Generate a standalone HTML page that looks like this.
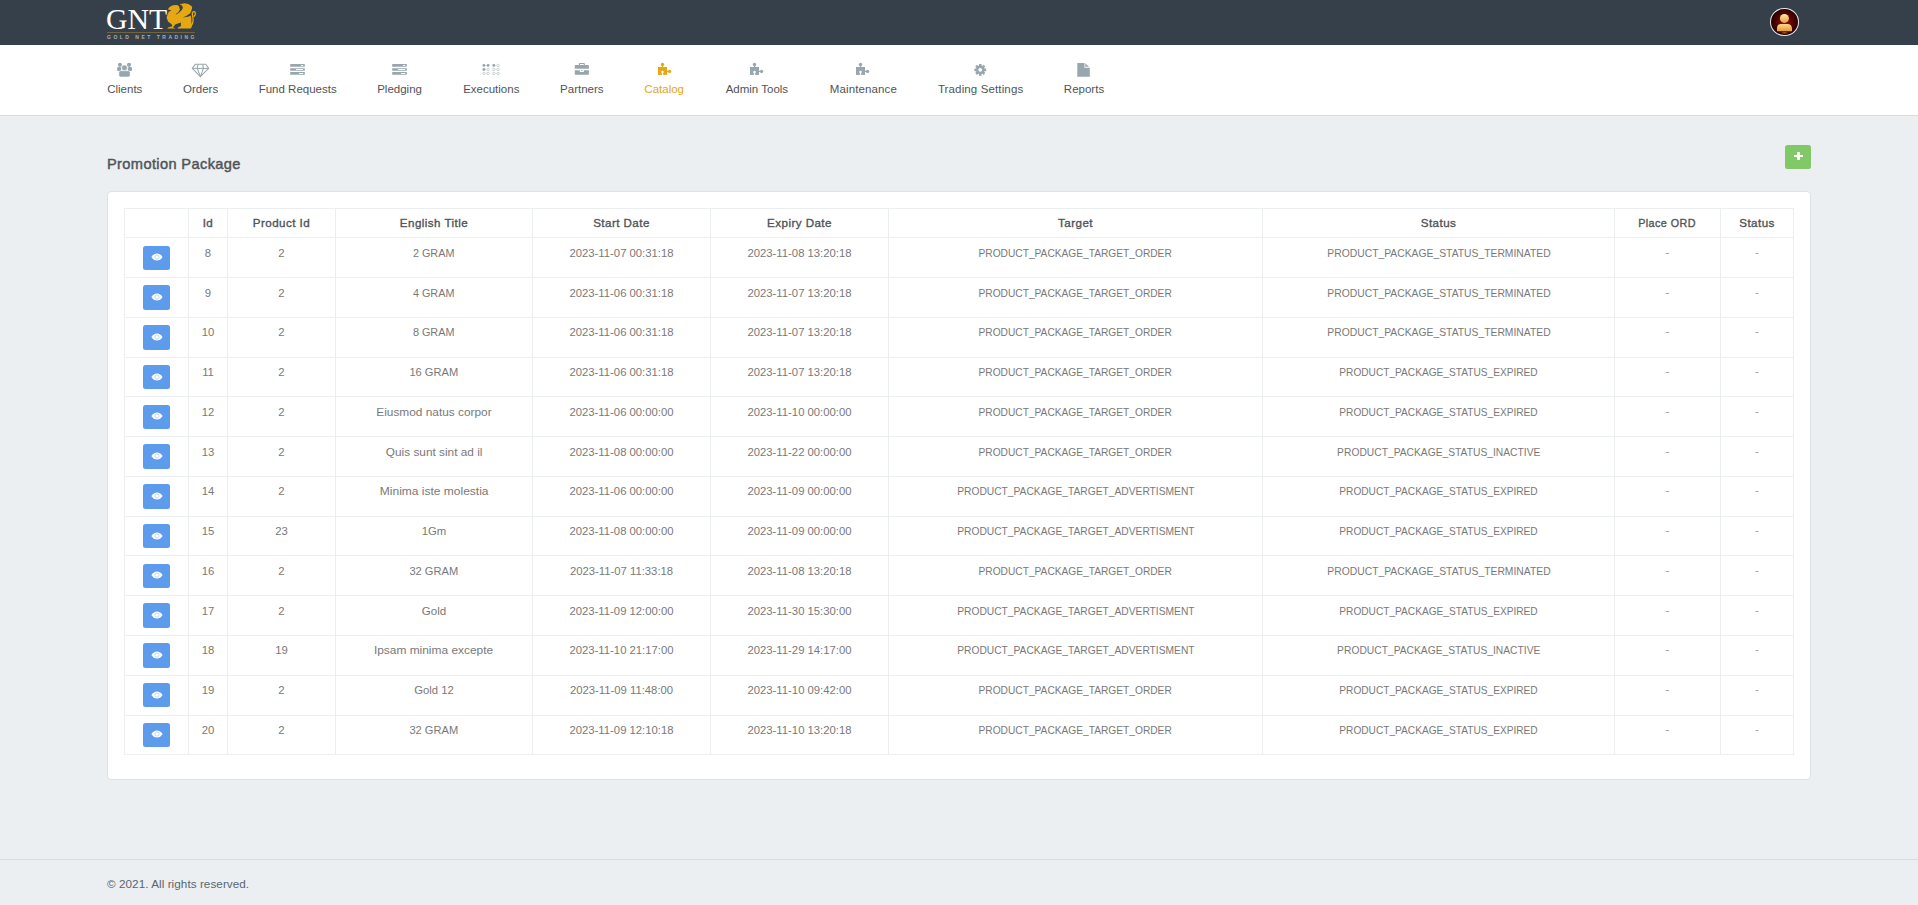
<!DOCTYPE html>
<html><head><meta charset="utf-8"><title>Promotion Package</title>
<style>
*{box-sizing:border-box;margin:0;padding:0}
html,body{width:1918px;height:905px;overflow:hidden}
body{background:#ebeff2;font-family:"Liberation Sans",sans-serif;color:#797979;position:relative}
.topbar{position:absolute;left:0;top:0;width:1918px;height:45px;background:#36404a}
.logo{position:absolute;left:107px;top:0;width:100px;height:45px}
.gnt{position:absolute;left:-1px;top:2.8px;font-family:"Liberation Serif",serif;color:#fff;font-size:29.8px;letter-spacing:0px;line-height:32px}
.gline{position:absolute;left:0;top:32px;width:88px;height:1px;background:#6e6440}
.gsub{position:absolute;left:0;top:34px;font-size:5px;line-height:6px;color:#a9aeb2;letter-spacing:2.5px;font-weight:bold;white-space:nowrap}
.avatar{position:absolute;left:1770px;top:7.5px;width:29px;height:28.6px;border-radius:50%;border:1.2px solid #e6e6e6;background:radial-gradient(circle at 52% 50%,#9a1005 0%,#600502 35%,#240000 72%,#0c0000 100%);overflow:hidden}
.navbar{position:absolute;left:0;top:45px;width:1918px;height:71px;background:#fff;border-bottom:1px solid #d6dbdf;box-shadow:0 1px 0 #eef1f4}
.ni{position:absolute;top:0;width:120px;height:70px;text-align:center}
.ic{position:absolute;line-height:0}
.nl{position:absolute;left:0;top:36px;width:120px;font-size:11.5px;line-height:16px;color:#505458;white-space:nowrap}
.act .nl{color:#e4a812}
.title{position:absolute;left:107px;top:154px;font-size:14.6px;line-height:20px;font-weight:normal;-webkit-text-stroke:0.45px #505458;letter-spacing:0.38px;color:#505458;white-space:nowrap}
.plus{position:absolute;left:1785px;top:145px;width:26px;height:24px;background:#81c868;border-radius:2.5px}
.card{position:absolute;left:107px;top:191px;width:1704px;height:589px;background:#fff;border:1px solid #dde2e6;border-radius:4px}
.tbl{position:absolute;left:124px;top:208px;width:1670px;height:547.31px}
.vl{position:absolute;top:0;width:1px;background:#ebeff2}
.hl{position:absolute;left:0;width:1670px;height:1px;background:#ebeff2}
.th{position:absolute;top:7px;font-size:11.6px;line-height:16px;font-weight:normal;-webkit-text-stroke:0.35px #505458;letter-spacing:0.45px;color:#505458;text-align:center;white-space:nowrap}
.td{position:absolute;font-size:11.3px;line-height:16px;padding-top:0;color:#797979;text-align:center;white-space:nowrap}
.dash{margin-top:-1px;color:#9a9a9a}
.btn{position:absolute;width:27px;height:24.5px;background:#5d9cec;border-radius:2.5px;display:flex;align-items:center;justify-content:center}
.btn svg{display:block;margin-top:-1px;margin-left:1px}
.footer{position:absolute;left:0;top:859px;width:1918px;height:46px;border-top:1px solid #d7dce0}
.foot{position:absolute;left:107px;top:15.6px;font-size:11.7px;line-height:16px;letter-spacing:0.06px;color:#58666e;white-space:nowrap}
</style></head>
<body>
<div class="topbar">
 <div class="logo">
  <div class="gnt">GNT</div>
  <svg style="position:absolute;left:56px;top:1px" width="36" height="30" viewBox="0 0 36 30"><path fill="#e5a812" d="M5.3 7.6L6.6 6.0L9.9 4.3L13.9 4.0L15.9 5.0L16.9 8.6L15.6 10.9L12.6 13.3L13.2 13.6L16.6 11.2L19.2 8.6L19.9 6.3L18.6 4.3L16.6 3.3L21.5 2.3L25.2 3.0L28.5 5.0L29.2 6.6L28.5 9.3L27.2 12.3L23.2 14.9L19.6 16.6L25.9 15.4L27.6 14.6L28.2 16.5L28.4 20.6L28.8 25.9L27.5 27.5L14.6 27.5L15.2 26.2L17.9 25.2L17.9 21.5L12.6 23.2L9.9 26.2L12.6 27.5L4.3 27.5L5.0 26.5L9.3 25.2L8.6 23.2L5.0 20.6L3.6 16.6L4.6 13.3L5.6 11.6L5.4 10.9L8.4 9.5L5.2 8.6Z"/><path fill="none" stroke="#e5a812" stroke-width="1.3" stroke-linecap="round" d="M28.3 24.5C30.6 22 30.2 17 29.4 13.6C29 11.5 30 10.3 31.3 10.6C32.6 11 32.8 13.5 31.2 15.3"/></svg>
  <div class="gline"></div>
  <div class="gsub">GOLD NET TRADING</div>
 </div>
 <div class="avatar"><svg width="27" height="27" viewBox="0 0 27 27"><defs><linearGradient id="gg" x1="0" y1="0" x2="0" y2="1"><stop offset="0" stop-color="#ffeaa0"/><stop offset="1" stop-color="#e8a040"/></linearGradient><linearGradient id="gb" x1="0" y1="0" x2="0" y2="1"><stop offset="0" stop-color="#fcd88a"/><stop offset="1" stop-color="#e39a3a"/></linearGradient><radialGradient id="gl" cx="0.5" cy="0.5" r="0.5"><stop offset="0" stop-color="#c9901a" stop-opacity="0.8"/><stop offset="1" stop-color="#c9901a" stop-opacity="0"/></radialGradient></defs><ellipse cx="13.5" cy="23.8" rx="4" ry="1.2" fill="url(#gl)"/><circle cx="13.4" cy="9.4" r="4.5" fill="url(#gg)"/><path d="M6 22.3V19.5C6 16.6 7.6 14.9 10.5 14.9H16.5C19.4 14.9 21 16.6 21 19.5V22.3Z" fill="url(#gb)"/></svg></div>
</div>
<div class="navbar">
<div class="ni" style="left:64.75px"><div class="nl" style="">Clients</div></div><div class="ni" style="left:140.60px"><div class="nl" style="">Orders</div></div><div class="ni" style="left:237.70px"><div class="nl" style="">Fund Requests</div></div><div class="ni" style="left:339.60px"><div class="nl" style="">Pledging</div></div><div class="ni" style="left:431.30px"><div class="nl" style="">Executions</div></div><div class="ni" style="left:521.80px"><div class="nl" style="">Partners</div></div><div class="ni act" style="left:604.20px"><div class="nl" style="">Catalog</div></div><div class="ni" style="left:696.90px"><div class="nl" style="">Admin Tools</div></div><div class="ni" style="left:803.40px"><div class="nl" style=";letter-spacing:0.13px">Maintenance</div></div><div class="ni" style="left:920.60px"><div class="nl" style=";letter-spacing:0.13px">Trading Settings</div></div><div class="ni" style="left:1024.00px"><div class="nl" style="">Reports</div></div><div class="ic" style="left:116px;top:17px"><svg width="16" height="16" viewBox="0 0 16 16"><circle cx="3.96" cy="2.86" r="2.05" fill="#98a6ad"/><circle cx="13.0" cy="2.86" r="2.05" fill="#98a6ad"/><rect x="1.1" y="5.1" width="4" height="3.8" rx="1.2" fill="#98a6ad"/><rect x="11.9" y="5.1" width="4.1" height="3.8" rx="1.2" fill="#98a6ad"/><circle cx="8.45" cy="5.8" r="2.85" fill="#98a6ad" stroke="#fff" stroke-width="0.5"/><path d="M2.9 10.4Q2.9 8.75 4.5 8.75H12.5Q14.1 8.75 14.1 10.4V13.2Q14.1 15 12.3 15H4.7Q2.9 15 2.9 13.2Z" fill="#98a6ad" stroke="#fff" stroke-width="0.5"/></svg></div><div class="ic" style="left:189px;top:15px"><svg width="22" height="20" viewBox="0 0 22 20" fill="none" stroke="#98a6ad" stroke-width="1.05" stroke-linejoin="round"><path d="M6.2 4.3H16.8L19.7 8.4L11.4 16.6L3.3 8.4Z"/><path d="M3.3 8.4H19.7"/><path d="M9.1 4.3L8.3 8.4L11.4 16.6L14.4 8.4L13.7 4.3"/></svg></div><div class="ic" style="left:287px;top:15px"><svg width="22" height="20" viewBox="0 0 22 20" fill="#98a6ad"><rect x="3.2" y="4.1" width="14.6" height="2.65" rx="0.5"/><rect x="3.2" y="8.15" width="14.6" height="2.65" rx="0.5"/><rect x="3.2" y="12.1" width="14.6" height="2.7" rx="0.5"/><g fill="#fff"><rect x="13.8" y="5" width="2.5" height="0.9" rx="0.45"/><rect x="8.8" y="9.05" width="7.5" height="0.9" rx="0.45"/><rect x="11.8" y="13" width="4.5" height="0.9" rx="0.45"/></g></svg></div><div class="ic" style="left:389px;top:15px"><svg width="22" height="20" viewBox="0 0 22 20" fill="#98a6ad"><rect x="3.2" y="4.1" width="14.6" height="2.65" rx="0.5"/><rect x="3.2" y="8.15" width="14.6" height="2.65" rx="0.5"/><rect x="3.2" y="12.1" width="14.6" height="2.7" rx="0.5"/><g fill="#fff"><rect x="13.8" y="5" width="2.5" height="0.9" rx="0.45"/><rect x="8.8" y="9.05" width="7.5" height="0.9" rx="0.45"/><rect x="11.8" y="13" width="4.5" height="0.9" rx="0.45"/></g></svg></div><div class="ic" style="left:479px;top:15px"><svg width="24" height="20" viewBox="0 0 24 20"><g stroke="#cfd6da" stroke-width="0.5"><path d="M4.9 5.4H9.1M14.8 5.4H19.1M4.9 9.5H9.1M14.8 9.5H19.1M4.9 13.5H9.1M14.8 13.5H19.1"/></g><g fill="#98a6ad"><circle cx="4.9" cy="5.4" r="1.45"/><circle cx="9.1" cy="5.4" r="1.45"/><circle cx="14.8" cy="5.4" r="1.45"/><circle cx="4.9" cy="9.5" r="1.45"/></g><g fill="#fff" stroke="#bcc5ca" stroke-width="0.8"><circle cx="19.1" cy="5.4" r="1.2"/><circle cx="9.1" cy="9.5" r="1.2"/><circle cx="14.8" cy="9.5" r="1.2"/><circle cx="19.1" cy="9.5" r="1.2"/><circle cx="4.9" cy="13.5" r="1.2"/><circle cx="9.1" cy="13.5" r="1.2"/><circle cx="14.8" cy="13.5" r="1.2"/><circle cx="19.1" cy="13.5" r="1.2"/></g></svg></div><div class="ic" style="left:570px;top:15px"><svg width="22" height="20" viewBox="0 0 22 20" fill="#98a6ad"><path d="M8.9 5.2V3.8Q8.9 3.1 9.6 3.1H14.1Q14.8 3.1 14.8 3.8V5.2H13.8V4.1H10V5.2Z"/><path d="M4.75 5.7Q4.75 5 5.45 5H18.2Q18.9 5 18.9 5.7V8.8H4.75Z"/><path d="M4.75 10.2H9.8V12H13.8V10.2H18.9V14Q18.9 14.7 18.2 14.7H5.45Q4.75 14.7 4.75 14Z"/><rect x="11" y="10.2" width="1.6" height="0.7"/></svg></div><div class="ic" style="left:653px;top:15px"><svg width="22" height="20" viewBox="0 0 22 20"><g fill="#e4a812"><rect x="5" y="7" width="9" height="7.9"/><circle cx="9.5" cy="4.45" r="1.7"/><rect x="8.85" y="5.5" width="1.3" height="1.6"/><circle cx="16.6" cy="11.4" r="1.6"/><rect x="13.9" y="10.75" width="1.6" height="1.3"/></g><circle cx="9.5" cy="12.1" r="1.25" fill="#fff"/><rect x="8.9" y="12.1" width="1.2" height="3" fill="#fff"/></svg></div><div class="ic" style="left:745.1px;top:15px"><svg width="22" height="20" viewBox="0 0 22 20"><g fill="#98a6ad"><rect x="5" y="7" width="9" height="7.9"/><circle cx="9.5" cy="4.45" r="1.7"/><rect x="8.85" y="5.5" width="1.3" height="1.6"/><circle cx="16.6" cy="11.4" r="1.6"/><rect x="13.9" y="10.75" width="1.6" height="1.3"/></g><circle cx="9.5" cy="12.1" r="1.25" fill="#fff"/><rect x="8.9" y="12.1" width="1.2" height="3" fill="#fff"/></svg></div><div class="ic" style="left:851.2px;top:15px"><svg width="22" height="20" viewBox="0 0 22 20"><g fill="#98a6ad"><rect x="5" y="7" width="9" height="7.9"/><circle cx="9.5" cy="4.45" r="1.7"/><rect x="8.85" y="5.5" width="1.3" height="1.6"/><circle cx="16.6" cy="11.4" r="1.6"/><rect x="13.9" y="10.75" width="1.6" height="1.3"/></g><circle cx="9.5" cy="12.1" r="1.25" fill="#fff"/><rect x="8.9" y="12.1" width="1.2" height="3" fill="#fff"/></svg></div><div class="ic" style="left:969px;top:15px"><svg width="22" height="20" viewBox="0 0 22 20"><g transform="translate(11.27 9.83)" fill="#98a6ad"><rect x="-1.3" y="-5.9" width="2.6" height="3" rx="0.3" transform="rotate(0)"/><rect x="-1.3" y="-5.9" width="2.6" height="3" rx="0.3" transform="rotate(45)"/><rect x="-1.3" y="-5.9" width="2.6" height="3" rx="0.3" transform="rotate(90)"/><rect x="-1.3" y="-5.9" width="2.6" height="3" rx="0.3" transform="rotate(135)"/><rect x="-1.3" y="-5.9" width="2.6" height="3" rx="0.3" transform="rotate(180)"/><rect x="-1.3" y="-5.9" width="2.6" height="3" rx="0.3" transform="rotate(225)"/><rect x="-1.3" y="-5.9" width="2.6" height="3" rx="0.3" transform="rotate(270)"/><rect x="-1.3" y="-5.9" width="2.6" height="3" rx="0.3" transform="rotate(315)"/><circle r="4.3"/><circle r="1.9" fill="#fff"/></g></svg></div><div class="ic" style="left:1073px;top:15px"><svg width="22" height="20" viewBox="0 0 22 20"><path fill="#98a6ad" d="M4.3 3H11.3V7.8H16.8V16.8H4.3Z"/><rect x="11.3" y="3" width="1.1" height="4.6" fill="#c3cbcf"/><path fill="#98a6ad" d="M12.4 3.4L16.1 6.7H12.4Z"/></svg></div>
</div>
<div class="title">Promotion Package</div>
<div class="plus"><svg style="position:absolute;left:9px;top:7px" width="9" height="9" viewBox="0 0 9 9"><path d="M3.1 0h2.8v2.9H9v2.2H5.9V8H3.1V5.1H0V2.9h3.1z" fill="#fff"/></svg></div>
<div class="card"></div>
<div class="tbl">
<div class="vl" style="left:0px;height:547.31px"></div><div class="vl" style="left:64px;height:547.31px"></div><div class="vl" style="left:103px;height:547.31px"></div><div class="vl" style="left:211px;height:547.31px"></div><div class="vl" style="left:408px;height:547.31px"></div><div class="vl" style="left:586px;height:547.31px"></div><div class="vl" style="left:764px;height:547.31px"></div><div class="vl" style="left:1138px;height:547.31px"></div><div class="vl" style="left:1490px;height:547.31px"></div><div class="vl" style="left:1596px;height:547.31px"></div><div class="vl" style="left:1669px;height:547.31px"></div><div class="hl" style="top:0px"></div><div class="hl" style="top:29px"></div><div class="hl" style="top:69px"></div><div class="hl" style="top:109px"></div><div class="hl" style="top:149px"></div><div class="hl" style="top:188px"></div><div class="hl" style="top:228px"></div><div class="hl" style="top:268px"></div><div class="hl" style="top:308px"></div><div class="hl" style="top:347px"></div><div class="hl" style="top:387px"></div><div class="hl" style="top:427px"></div><div class="hl" style="top:467px"></div><div class="hl" style="top:507px"></div><div class="hl" style="top:546px"></div>
<div class="th" style="left:65px;width:38px">Id</div><div class="th" style="left:104px;width:107px">Product Id</div><div class="th" style="left:212px;width:196px">English Title</div><div class="th" style="left:409px;width:177px">Start Date</div><div class="th" style="left:587px;width:177px">Expiry Date</div><div class="th" style="left:765px;width:373px">Target</div><div class="th" style="left:1139px;width:351px">Status</div><div class="th" style="left:1491px;width:105px"><span style="display:inline-block;transform:scaleX(0.93)">Place ORD</span></div><div class="th" style="left:1597px;width:72px">Status</div><div class="btn" style="left:19px;top:37.60px"><svg width="12" height="8" viewBox="0 0 12 8"><path d="M0.4 4C1.8 1.6 3.8 0.4 6 0.4S10.2 1.6 11.6 4C10.2 6.4 8.2 7.6 6 7.6S1.8 6.4 0.4 4Z" fill="#fff"/><circle cx="6" cy="4" r="2.1" fill="none" stroke="#a9cbf5" stroke-width="0.7"/></svg></div><div class="td" style="left:65px;width:38px;top:37px">8</div><div class="td" style="left:104px;width:107px;top:37px">2</div><div class="td" style="left:212px;width:196px;top:37px"><span style="display:inline-block;transform:scaleX(0.9581)">2 GRAM</span></div><div class="td" style="left:409px;width:177px;top:37px">2023-11-07 00:31:18</div><div class="td" style="left:587px;width:177px;top:37px">2023-11-08 13:20:18</div><div class="td" style="left:765px;width:373px;top:37px"><span style="display:inline-block;transform:scaleX(0.9019)">PRODUCT_PACKAGE_TARGET_ORDER</span></div><div class="td" style="left:1139px;width:351px;top:37px"><span style="display:inline-block;transform:scaleX(0.9152)">PRODUCT_PACKAGE_STATUS_TERMINATED</span></div><div class="td dash" style="left:1491px;width:105px;top:37px">-</div><div class="td dash" style="left:1597px;width:72px;top:37px">-</div><div class="btn" style="left:19px;top:77.35px"><svg width="12" height="8" viewBox="0 0 12 8"><path d="M0.4 4C1.8 1.6 3.8 0.4 6 0.4S10.2 1.6 11.6 4C10.2 6.4 8.2 7.6 6 7.6S1.8 6.4 0.4 4Z" fill="#fff"/><circle cx="6" cy="4" r="2.1" fill="none" stroke="#a9cbf5" stroke-width="0.7"/></svg></div><div class="td" style="left:65px;width:38px;top:77px">9</div><div class="td" style="left:104px;width:107px;top:77px">2</div><div class="td" style="left:212px;width:196px;top:77px"><span style="display:inline-block;transform:scaleX(0.9581)">4 GRAM</span></div><div class="td" style="left:409px;width:177px;top:77px">2023-11-06 00:31:18</div><div class="td" style="left:587px;width:177px;top:77px">2023-11-07 13:20:18</div><div class="td" style="left:765px;width:373px;top:77px"><span style="display:inline-block;transform:scaleX(0.9019)">PRODUCT_PACKAGE_TARGET_ORDER</span></div><div class="td" style="left:1139px;width:351px;top:77px"><span style="display:inline-block;transform:scaleX(0.9152)">PRODUCT_PACKAGE_STATUS_TERMINATED</span></div><div class="td dash" style="left:1491px;width:105px;top:77px">-</div><div class="td dash" style="left:1597px;width:72px;top:77px">-</div><div class="btn" style="left:19px;top:117.10px"><svg width="12" height="8" viewBox="0 0 12 8"><path d="M0.4 4C1.8 1.6 3.8 0.4 6 0.4S10.2 1.6 11.6 4C10.2 6.4 8.2 7.6 6 7.6S1.8 6.4 0.4 4Z" fill="#fff"/><circle cx="6" cy="4" r="2.1" fill="none" stroke="#a9cbf5" stroke-width="0.7"/></svg></div><div class="td" style="left:65px;width:38px;top:116px">10</div><div class="td" style="left:104px;width:107px;top:116px">2</div><div class="td" style="left:212px;width:196px;top:116px"><span style="display:inline-block;transform:scaleX(0.9581)">8 GRAM</span></div><div class="td" style="left:409px;width:177px;top:116px">2023-11-06 00:31:18</div><div class="td" style="left:587px;width:177px;top:116px">2023-11-07 13:20:18</div><div class="td" style="left:765px;width:373px;top:116px"><span style="display:inline-block;transform:scaleX(0.9019)">PRODUCT_PACKAGE_TARGET_ORDER</span></div><div class="td" style="left:1139px;width:351px;top:116px"><span style="display:inline-block;transform:scaleX(0.9152)">PRODUCT_PACKAGE_STATUS_TERMINATED</span></div><div class="td dash" style="left:1491px;width:105px;top:116px">-</div><div class="td dash" style="left:1597px;width:72px;top:116px">-</div><div class="btn" style="left:19px;top:156.85px"><svg width="12" height="8" viewBox="0 0 12 8"><path d="M0.4 4C1.8 1.6 3.8 0.4 6 0.4S10.2 1.6 11.6 4C10.2 6.4 8.2 7.6 6 7.6S1.8 6.4 0.4 4Z" fill="#fff"/><circle cx="6" cy="4" r="2.1" fill="none" stroke="#a9cbf5" stroke-width="0.7"/></svg></div><div class="td" style="left:65px;width:38px;top:156px">11</div><div class="td" style="left:104px;width:107px;top:156px">2</div><div class="td" style="left:212px;width:196px;top:156px"><span style="display:inline-block;transform:scaleX(0.9837)">16 GRAM</span></div><div class="td" style="left:409px;width:177px;top:156px">2023-11-06 00:31:18</div><div class="td" style="left:587px;width:177px;top:156px">2023-11-07 13:20:18</div><div class="td" style="left:765px;width:373px;top:156px"><span style="display:inline-block;transform:scaleX(0.9019)">PRODUCT_PACKAGE_TARGET_ORDER</span></div><div class="td" style="left:1139px;width:351px;top:156px"><span style="display:inline-block;transform:scaleX(0.8977)">PRODUCT_PACKAGE_STATUS_EXPIRED</span></div><div class="td dash" style="left:1491px;width:105px;top:156px">-</div><div class="td dash" style="left:1597px;width:72px;top:156px">-</div><div class="btn" style="left:19px;top:196.60px"><svg width="12" height="8" viewBox="0 0 12 8"><path d="M0.4 4C1.8 1.6 3.8 0.4 6 0.4S10.2 1.6 11.6 4C10.2 6.4 8.2 7.6 6 7.6S1.8 6.4 0.4 4Z" fill="#fff"/><circle cx="6" cy="4" r="2.1" fill="none" stroke="#a9cbf5" stroke-width="0.7"/></svg></div><div class="td" style="left:65px;width:38px;top:196px">12</div><div class="td" style="left:104px;width:107px;top:196px">2</div><div class="td" style="left:212px;width:196px;top:196px"><span style="display:inline-block;transform:scaleX(1.05)">Eiusmod natus corpor</span></div><div class="td" style="left:409px;width:177px;top:196px">2023-11-06 00:00:00</div><div class="td" style="left:587px;width:177px;top:196px">2023-11-10 00:00:00</div><div class="td" style="left:765px;width:373px;top:196px"><span style="display:inline-block;transform:scaleX(0.9019)">PRODUCT_PACKAGE_TARGET_ORDER</span></div><div class="td" style="left:1139px;width:351px;top:196px"><span style="display:inline-block;transform:scaleX(0.8977)">PRODUCT_PACKAGE_STATUS_EXPIRED</span></div><div class="td dash" style="left:1491px;width:105px;top:196px">-</div><div class="td dash" style="left:1597px;width:72px;top:196px">-</div><div class="btn" style="left:19px;top:236.35px"><svg width="12" height="8" viewBox="0 0 12 8"><path d="M0.4 4C1.8 1.6 3.8 0.4 6 0.4S10.2 1.6 11.6 4C10.2 6.4 8.2 7.6 6 7.6S1.8 6.4 0.4 4Z" fill="#fff"/><circle cx="6" cy="4" r="2.1" fill="none" stroke="#a9cbf5" stroke-width="0.7"/></svg></div><div class="td" style="left:65px;width:38px;top:236px">13</div><div class="td" style="left:104px;width:107px;top:236px">2</div><div class="td" style="left:212px;width:196px;top:236px"><span style="display:inline-block;transform:scaleX(1.0467)">Quis sunt sint ad il</span></div><div class="td" style="left:409px;width:177px;top:236px">2023-11-08 00:00:00</div><div class="td" style="left:587px;width:177px;top:236px">2023-11-22 00:00:00</div><div class="td" style="left:765px;width:373px;top:236px"><span style="display:inline-block;transform:scaleX(0.9019)">PRODUCT_PACKAGE_TARGET_ORDER</span></div><div class="td" style="left:1139px;width:351px;top:236px"><span style="display:inline-block;transform:scaleX(0.9094)">PRODUCT_PACKAGE_STATUS_INACTIVE</span></div><div class="td dash" style="left:1491px;width:105px;top:236px">-</div><div class="td dash" style="left:1597px;width:72px;top:236px">-</div><div class="btn" style="left:19px;top:276.10px"><svg width="12" height="8" viewBox="0 0 12 8"><path d="M0.4 4C1.8 1.6 3.8 0.4 6 0.4S10.2 1.6 11.6 4C10.2 6.4 8.2 7.6 6 7.6S1.8 6.4 0.4 4Z" fill="#fff"/><circle cx="6" cy="4" r="2.1" fill="none" stroke="#a9cbf5" stroke-width="0.7"/></svg></div><div class="td" style="left:65px;width:38px;top:275px">14</div><div class="td" style="left:104px;width:107px;top:275px">2</div><div class="td" style="left:212px;width:196px;top:275px"><span style="display:inline-block;transform:scaleX(1.0627)">Minima iste molestia</span></div><div class="td" style="left:409px;width:177px;top:275px">2023-11-06 00:00:00</div><div class="td" style="left:587px;width:177px;top:275px">2023-11-09 00:00:00</div><div class="td" style="left:765px;width:373px;top:275px"><span style="display:inline-block;transform:scaleX(0.9069)">PRODUCT_PACKAGE_TARGET_ADVERTISMENT</span></div><div class="td" style="left:1139px;width:351px;top:275px"><span style="display:inline-block;transform:scaleX(0.8977)">PRODUCT_PACKAGE_STATUS_EXPIRED</span></div><div class="td dash" style="left:1491px;width:105px;top:275px">-</div><div class="td dash" style="left:1597px;width:72px;top:275px">-</div><div class="btn" style="left:19px;top:315.85px"><svg width="12" height="8" viewBox="0 0 12 8"><path d="M0.4 4C1.8 1.6 3.8 0.4 6 0.4S10.2 1.6 11.6 4C10.2 6.4 8.2 7.6 6 7.6S1.8 6.4 0.4 4Z" fill="#fff"/><circle cx="6" cy="4" r="2.1" fill="none" stroke="#a9cbf5" stroke-width="0.7"/></svg></div><div class="td" style="left:65px;width:38px;top:315px">15</div><div class="td" style="left:104px;width:107px;top:315px">23</div><div class="td" style="left:212px;width:196px;top:315px">1Gm</div><div class="td" style="left:409px;width:177px;top:315px">2023-11-08 00:00:00</div><div class="td" style="left:587px;width:177px;top:315px">2023-11-09 00:00:00</div><div class="td" style="left:765px;width:373px;top:315px"><span style="display:inline-block;transform:scaleX(0.9069)">PRODUCT_PACKAGE_TARGET_ADVERTISMENT</span></div><div class="td" style="left:1139px;width:351px;top:315px"><span style="display:inline-block;transform:scaleX(0.8977)">PRODUCT_PACKAGE_STATUS_EXPIRED</span></div><div class="td dash" style="left:1491px;width:105px;top:315px">-</div><div class="td dash" style="left:1597px;width:72px;top:315px">-</div><div class="btn" style="left:19px;top:355.60px"><svg width="12" height="8" viewBox="0 0 12 8"><path d="M0.4 4C1.8 1.6 3.8 0.4 6 0.4S10.2 1.6 11.6 4C10.2 6.4 8.2 7.6 6 7.6S1.8 6.4 0.4 4Z" fill="#fff"/><circle cx="6" cy="4" r="2.1" fill="none" stroke="#a9cbf5" stroke-width="0.7"/></svg></div><div class="td" style="left:65px;width:38px;top:355px">16</div><div class="td" style="left:104px;width:107px;top:355px">2</div><div class="td" style="left:212px;width:196px;top:355px"><span style="display:inline-block;transform:scaleX(0.9837)">32 GRAM</span></div><div class="td" style="left:409px;width:177px;top:355px">2023-11-07 11:33:18</div><div class="td" style="left:587px;width:177px;top:355px">2023-11-08 13:20:18</div><div class="td" style="left:765px;width:373px;top:355px"><span style="display:inline-block;transform:scaleX(0.9019)">PRODUCT_PACKAGE_TARGET_ORDER</span></div><div class="td" style="left:1139px;width:351px;top:355px"><span style="display:inline-block;transform:scaleX(0.9152)">PRODUCT_PACKAGE_STATUS_TERMINATED</span></div><div class="td dash" style="left:1491px;width:105px;top:355px">-</div><div class="td dash" style="left:1597px;width:72px;top:355px">-</div><div class="btn" style="left:19px;top:395.35px"><svg width="12" height="8" viewBox="0 0 12 8"><path d="M0.4 4C1.8 1.6 3.8 0.4 6 0.4S10.2 1.6 11.6 4C10.2 6.4 8.2 7.6 6 7.6S1.8 6.4 0.4 4Z" fill="#fff"/><circle cx="6" cy="4" r="2.1" fill="none" stroke="#a9cbf5" stroke-width="0.7"/></svg></div><div class="td" style="left:65px;width:38px;top:395px">17</div><div class="td" style="left:104px;width:107px;top:395px">2</div><div class="td" style="left:212px;width:196px;top:395px"><span style="display:inline-block;transform:scaleX(1.0208)">Gold</span></div><div class="td" style="left:409px;width:177px;top:395px">2023-11-09 12:00:00</div><div class="td" style="left:587px;width:177px;top:395px">2023-11-30 15:30:00</div><div class="td" style="left:765px;width:373px;top:395px"><span style="display:inline-block;transform:scaleX(0.9069)">PRODUCT_PACKAGE_TARGET_ADVERTISMENT</span></div><div class="td" style="left:1139px;width:351px;top:395px"><span style="display:inline-block;transform:scaleX(0.8977)">PRODUCT_PACKAGE_STATUS_EXPIRED</span></div><div class="td dash" style="left:1491px;width:105px;top:395px">-</div><div class="td dash" style="left:1597px;width:72px;top:395px">-</div><div class="btn" style="left:19px;top:435.10px"><svg width="12" height="8" viewBox="0 0 12 8"><path d="M0.4 4C1.8 1.6 3.8 0.4 6 0.4S10.2 1.6 11.6 4C10.2 6.4 8.2 7.6 6 7.6S1.8 6.4 0.4 4Z" fill="#fff"/><circle cx="6" cy="4" r="2.1" fill="none" stroke="#a9cbf5" stroke-width="0.7"/></svg></div><div class="td" style="left:65px;width:38px;top:434px">18</div><div class="td" style="left:104px;width:107px;top:434px">19</div><div class="td" style="left:212px;width:196px;top:434px"><span style="display:inline-block;transform:scaleX(1.0549)">Ipsam minima excepte</span></div><div class="td" style="left:409px;width:177px;top:434px">2023-11-10 21:17:00</div><div class="td" style="left:587px;width:177px;top:434px">2023-11-29 14:17:00</div><div class="td" style="left:765px;width:373px;top:434px"><span style="display:inline-block;transform:scaleX(0.9069)">PRODUCT_PACKAGE_TARGET_ADVERTISMENT</span></div><div class="td" style="left:1139px;width:351px;top:434px"><span style="display:inline-block;transform:scaleX(0.9094)">PRODUCT_PACKAGE_STATUS_INACTIVE</span></div><div class="td dash" style="left:1491px;width:105px;top:434px">-</div><div class="td dash" style="left:1597px;width:72px;top:434px">-</div><div class="btn" style="left:19px;top:474.85px"><svg width="12" height="8" viewBox="0 0 12 8"><path d="M0.4 4C1.8 1.6 3.8 0.4 6 0.4S10.2 1.6 11.6 4C10.2 6.4 8.2 7.6 6 7.6S1.8 6.4 0.4 4Z" fill="#fff"/><circle cx="6" cy="4" r="2.1" fill="none" stroke="#a9cbf5" stroke-width="0.7"/></svg></div><div class="td" style="left:65px;width:38px;top:474px">19</div><div class="td" style="left:104px;width:107px;top:474px">2</div><div class="td" style="left:212px;width:196px;top:474px">Gold 12</div><div class="td" style="left:409px;width:177px;top:474px">2023-11-09 11:48:00</div><div class="td" style="left:587px;width:177px;top:474px">2023-11-10 09:42:00</div><div class="td" style="left:765px;width:373px;top:474px"><span style="display:inline-block;transform:scaleX(0.9019)">PRODUCT_PACKAGE_TARGET_ORDER</span></div><div class="td" style="left:1139px;width:351px;top:474px"><span style="display:inline-block;transform:scaleX(0.8977)">PRODUCT_PACKAGE_STATUS_EXPIRED</span></div><div class="td dash" style="left:1491px;width:105px;top:474px">-</div><div class="td dash" style="left:1597px;width:72px;top:474px">-</div><div class="btn" style="left:19px;top:514.60px"><svg width="12" height="8" viewBox="0 0 12 8"><path d="M0.4 4C1.8 1.6 3.8 0.4 6 0.4S10.2 1.6 11.6 4C10.2 6.4 8.2 7.6 6 7.6S1.8 6.4 0.4 4Z" fill="#fff"/><circle cx="6" cy="4" r="2.1" fill="none" stroke="#a9cbf5" stroke-width="0.7"/></svg></div><div class="td" style="left:65px;width:38px;top:514px">20</div><div class="td" style="left:104px;width:107px;top:514px">2</div><div class="td" style="left:212px;width:196px;top:514px"><span style="display:inline-block;transform:scaleX(0.9837)">32 GRAM</span></div><div class="td" style="left:409px;width:177px;top:514px">2023-11-09 12:10:18</div><div class="td" style="left:587px;width:177px;top:514px">2023-11-10 13:20:18</div><div class="td" style="left:765px;width:373px;top:514px"><span style="display:inline-block;transform:scaleX(0.9019)">PRODUCT_PACKAGE_TARGET_ORDER</span></div><div class="td" style="left:1139px;width:351px;top:514px"><span style="display:inline-block;transform:scaleX(0.8977)">PRODUCT_PACKAGE_STATUS_EXPIRED</span></div><div class="td dash" style="left:1491px;width:105px;top:514px">-</div><div class="td dash" style="left:1597px;width:72px;top:514px">-</div>
</div>
<div class="footer"><div class="foot">&copy; 2021. All rights reserved.</div></div>
</body></html>
